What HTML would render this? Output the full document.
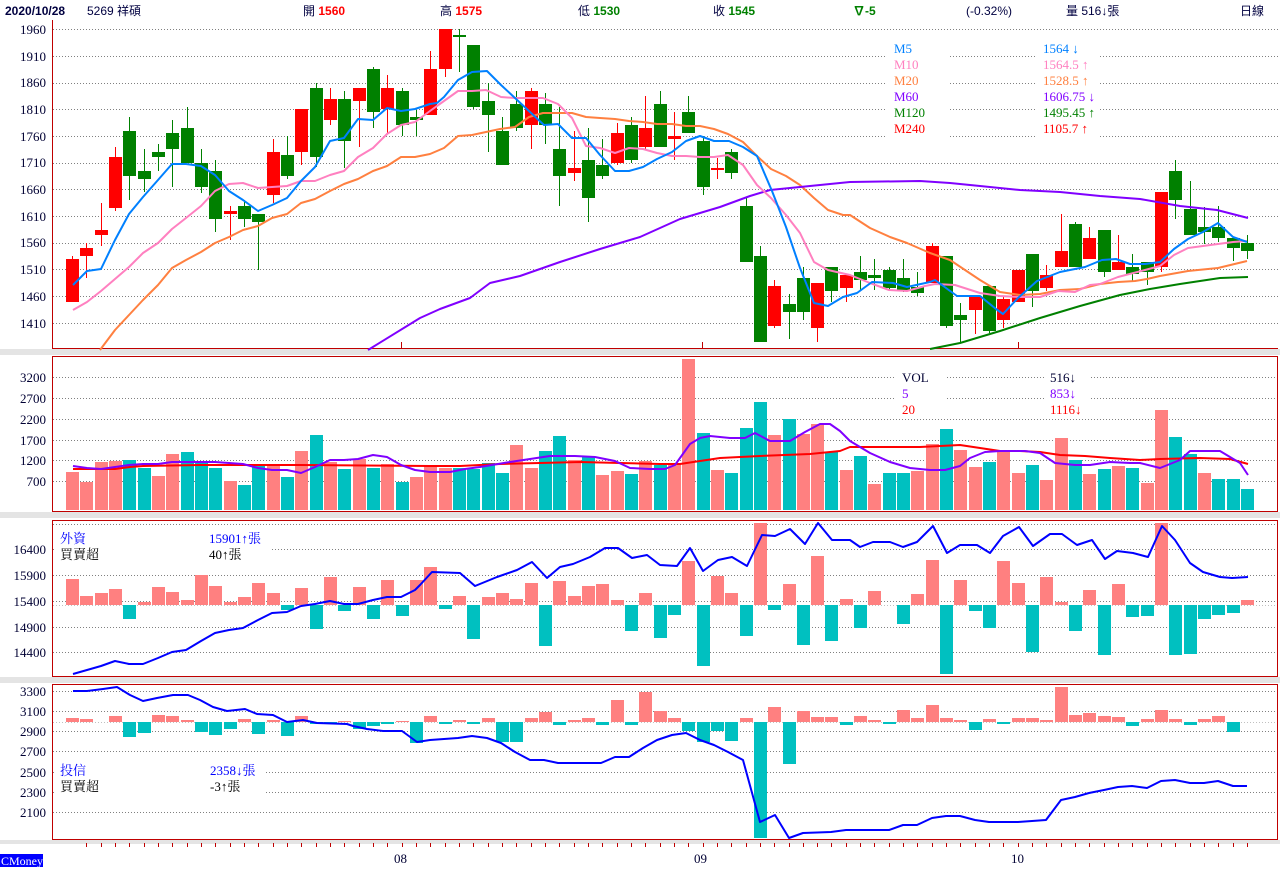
<!DOCTYPE html>
<html><head><meta charset="utf-8">
<style>
html,body{margin:0;padding:0;background:#fff;width:1280px;height:879px;overflow:hidden}
svg{display:block}
text{font-family:"Liberation Serif","Noto Serif CJK SC","Noto Sans CJK TC",serif;font-size:13px}
.h{font-family:"Liberation Sans","Noto Sans CJK TC",sans-serif;font-size:12px;fill:#000040}
.b{font-weight:bold}
.ax{fill:#000033;text-anchor:end}
</style></head><body>
<svg id="s" width="1280" height="879" viewBox="0 0 1280 879" xmlns="http://www.w3.org/2000/svg">
<g id="g"></g>
<!-- header -->
<text class="h b" x="5" y="15">2020/10/28</text>
<text class="h" x="87" y="15">5269 祥碩</text>
<text class="h" x="303" y="15">開 <tspan class="b" fill="#ff0000">1560</tspan></text>
<text class="h" x="440" y="15">高 <tspan class="b" fill="#ff0000">1575</tspan></text>
<text class="h" x="578" y="15">低 <tspan class="b" fill="#008000">1530</tspan></text>
<text class="h" x="713" y="15">收 <tspan class="b" fill="#008000">1545</tspan></text>
<text class="h b" x="853" y="15" style="fill:#008000">∇-5</text>
<text class="h" x="966" y="15">(-0.32%)</text>
<text class="h" x="1066" y="15">量 516↓張</text>
<text class="h" x="1240" y="15">日線</text>
<!-- axis labels -->
<g class="ax">
<text x="46" y="34" class="ax">1960</text><text x="46" y="61" class="ax">1910</text><text x="46" y="87" class="ax">1860</text><text x="46" y="114" class="ax">1810</text><text x="46" y="141" class="ax">1760</text><text x="46" y="167" class="ax">1710</text><text x="46" y="194" class="ax">1660</text><text x="46" y="221" class="ax">1610</text><text x="46" y="247" class="ax">1560</text><text x="46" y="274" class="ax">1510</text><text x="46" y="301" class="ax">1460</text><text x="46" y="328" class="ax">1410</text>
<text x="46" y="382" class="ax">3200</text><text x="46" y="403" class="ax">2700</text><text x="46" y="424" class="ax">2200</text><text x="46" y="445" class="ax">1700</text><text x="46" y="465" class="ax">1200</text><text x="46" y="486" class="ax">700</text>
<text x="46" y="554" class="ax">16400</text><text x="46" y="580" class="ax">15900</text><text x="46" y="606" class="ax">15400</text><text x="46" y="632" class="ax">14900</text><text x="46" y="657" class="ax">14400</text>
<text x="46" y="696" class="ax">3300</text><text x="46" y="716" class="ax">3100</text><text x="46" y="736" class="ax">2900</text><text x="46" y="756" class="ax">2700</text><text x="46" y="777" class="ax">2500</text><text x="46" y="797" class="ax">2300</text><text x="46" y="817" class="ax">2100</text>
</g>
<!-- legends -->
<text x="894" y="53" fill="#0080ff">M5</text><text x="1043" y="53" fill="#0080ff">1564 ↓</text>
<text x="894" y="69" fill="#ff80c0">M10</text><text x="1043" y="69" fill="#ff80c0">1564.5 ↑</text>
<text x="894" y="85" fill="#ff8040">M20</text><text x="1043" y="85" fill="#ff8040">1528.5 ↑</text>
<text x="894" y="101" fill="#8000ff">M60</text><text x="1043" y="101" fill="#8000ff">1606.75 ↓</text>
<text x="894" y="117" fill="#008000">M120</text><text x="1043" y="117" fill="#008000">1495.45 ↑</text>
<text x="894" y="133" fill="#ff0000">M240</text><text x="1043" y="133" fill="#ff0000">1105.7 ↑</text>
<text x="902" y="382" fill="#000033">VOL</text><text x="1050" y="382" fill="#000033">516↓</text>
<text x="902" y="398" fill="#8000ff">5</text><text x="1050" y="398" fill="#8000ff">853↓</text>
<text x="902" y="414" fill="#ff0000">20</text><text x="1050" y="414" fill="#ff0000">1116↓</text>
<text x="60" y="543" fill="#0000ff">外資</text><text x="209" y="543" fill="#0000ff">15901↑張</text>
<text x="60" y="559" fill="#000">買賣超</text><text x="209" y="559" fill="#000">40↑張</text>
<text x="60" y="775" fill="#0000ff">投信</text><text x="210" y="775" fill="#0000ff">2358↓張</text>
<text x="60" y="791" fill="#000">買賣超</text><text x="210" y="791" fill="#000">-3↑張</text>
<!-- bottom -->
<text x="394" y="863" fill="#000033">08</text>
<text x="694" y="863" fill="#000033">09</text>
<text x="1011" y="863" fill="#000033">10</text>
<rect x="0" y="854" width="43" height="13" fill="#0000ff"/>
<text x="1" y="865" fill="#fff" style="font-size:12px">CMoney</text>
</svg>
<script>
var NS="http://www.w3.org/2000/svg",G=document.getElementById('g');
function el(t,a){var e=document.createElementNS(NS,t);for(var k in a)e.setAttribute(k,a[k]);G.appendChild(e);return e;}
function X(i){return 72+i*14.33;}
[[349,6],[512,6],[677,6],[840,4]].forEach(function(s){el('rect',{x:0,y:s[0],width:1280,height:s[1],fill:'#e4e4e4'});});
function grid(ys,x1){ys.forEach(function(y){el('line',{x1:x1||53,x2:1278,y1:y+.5,y2:y+.5,stroke:'#808080','stroke-dasharray':'1,2','stroke-width':1});});}
grid([29,56,83,109,136,163,189,216,243,269,296,323]);
grid([377,398,419,440,460,481]);
grid([524,549,575,601,627,652]);
grid([691,711,731,751,772,792,812]);
el('rect',{x:885,y:38,width:65,height:100,fill:'#fff'});
el('rect',{x:1035,y:38,width:65,height:100,fill:'#fff'});
el('rect',{x:895,y:368,width:50,height:50,fill:'#fff'});
el('rect',{x:1045,y:368,width:45,height:50,fill:'#fff'});
el('rect',{x:55,y:528,width:215,height:36,fill:'#fff'});
el('rect',{x:55,y:760,width:210,height:36,fill:'#fff'});
el('line',{x1:53,x2:1278,y1:605.5,y2:605.5,stroke:'#c0c0c0','stroke-dasharray':'1,2'});
el('line',{x1:53,x2:1278,y1:722.5,y2:722.5,stroke:'#c0c0c0','stroke-dasharray':'1,2'});
el('line',{x1:52.5,x2:52.5,y1:20,y2:349,stroke:'#c00000'});
el('line',{x1:52,x2:1278,y1:348.5,y2:348.5,stroke:'#c00000'});
[[356,512],[520,677],[684,840]].forEach(function(p){el('rect',{x:52.5,y:p[0]+.5,width:1225,height:p[1]-p[0]-1,fill:'none',stroke:'#c00000'});});
[401,702,1018].forEach(function(x){el('line',{x1:x+.5,x2:x+.5,y1:342,y2:349,stroke:'#c00000'});});
for(var i=1;i<83;i++){el('line',{x1:Math.round(X(i))+.5,x2:Math.round(X(i))+.5,y1:843,y2:847,stroke:'#c00000'});}
var C="r 259 302 256 302|r 248 256 243 278|r 230 235 203 246|r 157 208 147 211|g 131 176 117 200|g 171 179 149 192|g 152 157 144 171|g 133 149 120 187|g 128 163 107 163|g 163 187 149 193|g 171 219 160 232|r 211 214 206 240|g 206 219 200 227|g 214 222 214 270|r 152 195 139 203|g 155 176 136 179|r 109 152 109 165|g 88 157 83 167|r 99 120 88 125|g 99 141 91 168|r 88 101 88 147|g 69 112 67 128|r 88 109 75 133|g 91 125 88 136|g 117 120 110 136|r 69 115 51 115|r 29 69 29 77|g 35 36 29 72|g 45 107 45 109|g 101 115 83 152|g 131 165 117 165|g 104 128 91 131|r 91 125 88 149|g 104 125 93 144|g 149 176 107 206|r 168 173 131 181|g 160 198 128 222|g 165 176 139 179|r 133 163 123 165|g 125 160 117 163|r 128 147 96 149|g 104 147 91 147|r 136 139 112 160|g 112 133 96 133|g 141 187 136 195|r 168 169 158 179|g 152 173 149 179|g 206 262 198 262|g 256 342 246 342|r 286 326 280 328|g 304 312 294 339|g 278 312 267 320|r 283 328 283 342|g 267 291 267 302|r 275 288 275 302|g 272 280 256 290|g 275 278 259 290|g 270 288 267 291|g 278 291 259 292|g 287 293 272 296|r 246 283 243 283|g 256 326 256 328|g 315 320 303 342|r 296 310 296 334|g 286 331 286 333|r 299 320 296 328|r 270 302 270 302|g 254 291 254 307|r 275 288 265 291|r 251 267 214 267|g 224 267 222 267|r 238 259 227 259|g 230 272 230 277|r 262 270 235 270|g 267 274 254 282|g 262 272 262 285|r 192 267 192 272|g 171 200 160 219|g 209 235 181 235|g 227 232 207 244|g 227 238 206 242|g 238 248 238 261|g 243 251 235 259".split('|');
C.forEach(function(s,i){var a=s.split(' '),c=a[0]=='r'?'#ff0000':'#008000',x=Math.round(X(i));
el('rect',{x:x,y:+a[3],width:1,height:a[4]-a[3],fill:c});
el('rect',{x:x-6,y:+a[1],width:13,height:Math.max(2,a[2]-a[1]),fill:c});});
function pl(pts,c,w){el('polyline',{points:pts,fill:'none',stroke:c,'stroke-width':w||2,'stroke-linejoin':'round'});}
pl("100,350 115,330 129,315 143,300 158,285 172,268 186,260 201,252 215,243 229,237 243,230 258,226 272,218 287,214 301,203 315,199 330,191 344,184 358,179 373,171 387,166 401,157 415,157 430,154 444,148 458,136 472,135 486,132 500,129 515,127 529,117 543,113 558,113 572,113 586,117 600,118 615,119 629,121 643,122 657,124 672,124 686,126 700,126 714,129 728,134 743,142 757,156 771,169 786,176 800,185 814,198 828,210 843,215 850,215 870,228 890,237 907,243 930,253 950,260 965,270 980,280 1000,292 1020,295 1040,294 1060,290 1080,289 1100,284 1118,282 1135,281 1147,279 1160,276 1188,271 1218,268 1247,261",'#ff8040');
pl("368,350 420,318 440,309 470,298 490,283 520,276 560,262 600,249 640,237 680,219 720,207 750,196 770,190 800,187 850,182 920,181 950,183 980,186 1020,190 1060,192 1100,196 1140,199 1180,206 1217,210 1248,218",'#8000ff');
pl("930,349 960,343 1000,331 1040,318 1080,306 1120,295 1150,289 1180,284 1220,278 1248,277",'#008000');
pl("73,310 87,302 101,291 115,279 129,267 143,253 158,243 172,229 186,218 201,206 215,191 229,184 243,183 258,188 272,187 287,186 301,181 315,181 330,175 344,171 358,157 373,148 387,134 401,125 415,122 430,111 444,101 458,91 472,91 486,90 501,97 515,98 529,98 543,98 558,104 572,118 586,146 600,148 615,153 629,148 643,149 657,153 672,156 686,156 700,157 714,157 728,155 743,165 757,185 771,198 786,215 800,233 814,262 828,270 850,275 870,283 889,290 907,291 925,286 935,284 955,285 980,293 1000,296 1020,297 1040,297 1058,291 1075,292 1090,285 1100,284 1118,277 1145,270 1160,266 1174,255 1188,248 1203,246 1218,244 1233,242 1247,241",'#ff80c0');
pl("73,285 87,271 101,269 115,240 129,214 143,197 158,180 172,164 186,164 201,166 215,175 229,191 243,200 258,211 272,205 287,198 301,181 315,167 330,141 344,138 358,119 373,120 387,108 401,111 415,109 430,104 437,103 444,97 458,80 472,72 487,71 501,85 515,98 530,112 544,125 558,124 572,138 586,138 600,155 615,171 629,171 643,167 657,159 672,152 686,141 700,136 714,141 729,141 743,147 757,156 772,191 786,227 800,268 814,303 828,306 843,297 857,293 872,282 893,283 907,287 930,282 935,280 957,296 980,296 996,309 1003,314 1018,298 1037,281 1060,272 1085,267 1102,260 1116,259 1130,264 1145,264 1160,262 1174,249 1188,239 1203,232 1218,223 1233,237 1247,242",'#0080ff');
var V="s472 s482 s462 s461 t460 t468 s476 s454 t452 t461 t468 s481 t485 t465 s466 t477 s451 t435 s462 t469 s459 t468 s464 t482 s477 s466 s468 t468 t469 t463 t473 s445 s468 t451 t436 s460 t457 s475 s471 t474 s461 t465 s463 s359 t433 s470 t473 t428 t402 s435 t419 s434 s424 t452 s470 t456 s484 t473 t473 s471 s444 t429 s450 s467 t462 s451 s473 t465 s480 s438 t460 s474 t469 s466 t468 s483 s410 t437 t454 s473 t479 t479 t489".split(' ');
function col(c){return c=='s'?'#ff8080':'#00c0c0';}
V.forEach(function(v,i){var y=+v.slice(1);el('rect',{x:Math.round(X(i))-6,y:y,width:13,height:510-y,fill:col(v[0])});});
pl("73,469 115,469 130,467 143,466 200,465 300,465 430,466 460,466 500,464 540,463 580,462 620,463 660,464 680,464 700,461 720,458 760,456 810,454 840,451 850,447 920,447 960,445 980,448 1000,451 1020,451 1040,452 1060,455 1085,456 1110,458 1140,460 1160,459 1200,458 1230,459 1248,464",'#ff0000');
pl("73,466 87,468 101,469 115,467 129,465 143,464 158,464 172,462 215,462 229,463 243,464 258,468 272,470 287,470 301,473 315,467 330,460 344,460 358,459 373,455 387,457 401,465 415,470 430,472 450,472 465,469 480,467 510,462 530,459 550,456 575,456 595,457 615,461 630,468 650,469 665,469 675,465 690,444 700,438 710,436 730,438 745,438 755,433 770,441 790,441 805,432 820,424 830,424 840,431 850,441 870,453 890,462 910,468 930,470 945,470 960,466 970,458 985,452 1000,451 1025,451 1040,453 1055,463 1075,465 1090,465 1110,462 1130,463 1140,463 1160,468 1180,460 1190,451 1220,451 1240,463 1248,475",'#8000ff');
var F="s579 s596 s593 s589 t619 s602 s587 s592 s600 s575 s586 s602 s597 s583 s593 t610 s588 t629 s577 t611 s587 t619 s580 t616 s580 s567 t609 s596 t639 s597 s593 s599 s583 t646 s581 s596 s586 s584 s600 t631 s593 t638 t615 s561 t666 s576 s593 t636 s523 t610 s584 t645 s556 t641 s599 t628 s591 n t624 s594 s560 t674 s580 t611 t628 s561 s583 t652 s577 s602 t631 s590 t655 s584 t617 t616 s523 t655 t654 t619 t615 t613 s600".split(' ');
F.forEach(function(v,i){if(v=='n')return;var y=+v.slice(1),x=Math.round(X(i))-6;if(v[0]=='s')el('rect',{x:x,y:y,width:13,height:605-y,fill:col('s')});else el('rect',{x:x,y:605,width:13,height:y-605,fill:col('t')});});
pl("73,674 87,670 101,666 115,661 129,664 143,664 158,658 172,652 186,650 201,641 215,633 229,630 243,628 258,620 272,613 287,612 301,606 315,604 330,601 344,604 358,604 373,600 387,597 401,597 415,590 420,585 432,572 460,573 475,586 497,577 517,570 532,562 547,578 560,567 573,564 590,557 605,548 618,548 632,558 647,555 660,565 677,566 690,548 703,571 718,560 732,557 747,566 762,535 775,536 790,529 805,544 818,523 832,540 850,540 860,547 873,542 890,542 903,547 917,542 933,526 947,553 960,545 977,545 990,553 1003,536 1019,527 1033,546 1050,534 1062,534 1077,545 1092,540 1105,559 1117,551 1133,553 1148,557 1162,526 1175,540 1190,563 1203,572 1220,577 1232,578 1248,577",'#0000ff');
var T="s718 s719 n s716 t737 t733 s715 s716 s720 t732 t735 t729 s719 t734 s720 t736 s716 t724 t724 s721 t729 t726 t724 s721 t743 s716 t724 s720 t724 s718 t742 t742 s718 s712 t725 s720 s718 t725 s700 t725 s692 s711 s718 t731 t742 t731 t741 s718 t838 s707 t764 s711 s717 s717 t725 s716 s720 t724 s710 s718 s705 s718 s720 t730 s719 t724 s718 s718 s720 s687 s715 s713 s716 s717 t726 s719 s710 s719 t725 s719 s716 t732 n".split(' ');
T.forEach(function(v,i){if(v=='n')return;var y=+v.slice(1),x=Math.round(X(i))-6;if(v[0]=='s')el('rect',{x:x,y:y,width:13,height:722-y,fill:col('s')});else el('rect',{x:x,y:722,width:13,height:y-722,fill:col('t')});});
pl("73,691 87,691 103,689 117,687 130,695 143,701 157,698 173,695 188,695 200,700 213,707 227,711 245,709 257,714 273,715 287,722 303,720 317,723 347,724 353,726 367,729 383,731 402,731 417,742 430,740 458,738 472,736 487,738 501,743 515,752 530,760 544,760 558,763 601,763 615,757 629,757 643,748 657,740 672,735 686,733 700,740 714,745 728,752 743,760 760,822 775,815 789,838 803,833 831,832 846,830 889,830 903,825 917,825 932,818 946,816 960,816 975,820 989,822 1018,822 1046,820 1061,800 1075,797 1089,793 1104,790 1118,787 1132,786 1147,788 1161,781 1175,780 1190,783 1204,783 1218,781 1233,786 1247,786",'#0000ff');
</script>
</body></html>
